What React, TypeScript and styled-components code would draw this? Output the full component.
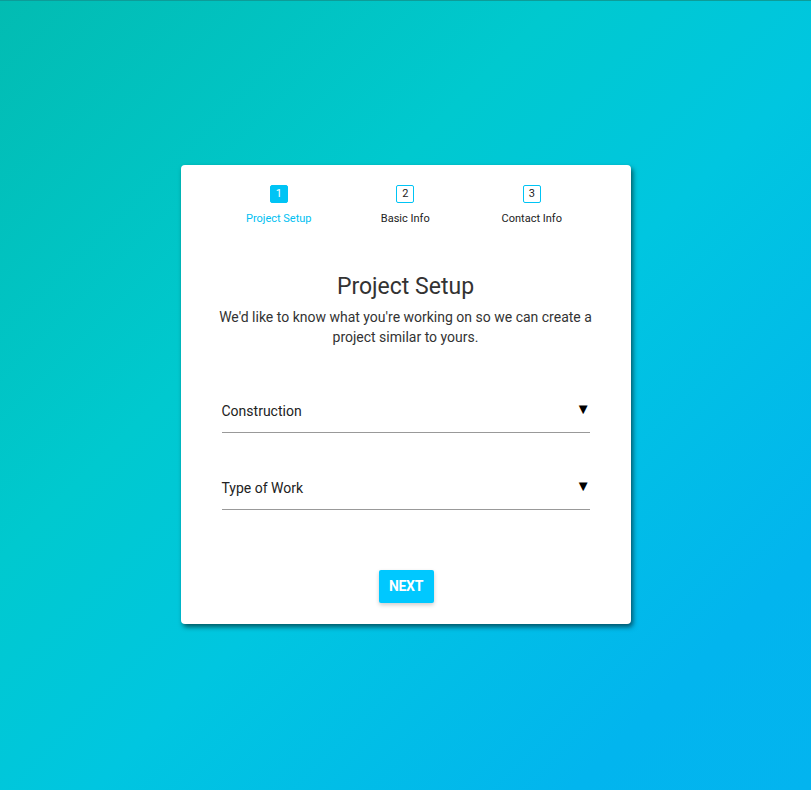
import React from "react";
import styled, { createGlobalStyle } from "styled-components";

const Global = createGlobalStyle`
  html, body { margin: 0; padding: 0; }
  body { font-family: Roboto, "Noto Sans", Arial, sans-serif; }
`;

const Page = styled.div`
  box-sizing: border-box;
  width: 100%;
  min-height: 790px;
  border-top: 1px solid #0d9c98;
  background: linear-gradient(135deg, #02bcb2 0%, #00c9cf 35%, #00c6e0 55%, #02b5ee 85%, #03b4ef 100%);
  display: flex;
  align-items: center;
  justify-content: center;
`;

const Card = styled.div`
  box-sizing: border-box;
  width: 450px;
  height: 459px;
  margin-top: -3px;
  background: #fff;
  border-radius: 4px;
  box-shadow: 2px 3px 5px rgba(0, 0, 0, 0.55);
  padding: 20px 0 21px;
  display: flex;
  flex-direction: column;
  align-items: center;
`;

const Steps = styled.div`
  display: grid;
  grid-template-columns: repeat(3, 126.5px);
  width: 380px;
`;

const Step = styled.div`
  display: flex;
  flex-direction: column;
  align-items: center;
`;

const StepBox = styled.div<{ $active?: boolean }>`
  box-sizing: border-box;
  width: 18px;
  height: 18px;
  border: 1px solid #00c4f5;
  border-radius: 2px;
  background: ${(p) => (p.$active ? "#00c4f5" : "#fff")};
  color: ${(p) => (p.$active ? "#fff" : "#222")};
  font-size: 11px;
  line-height: 16px;
  text-align: center;
`;

const StepLabel = styled.div<{ $active?: boolean }>`
  margin-top: 9px;
  font-size: 11px;
  line-height: 14px;
  color: ${(p) => (p.$active ? "#00bff2" : "#222")};
`;

const Title = styled.h1`
  margin: 47px 0 0;
  font-size: 23px;
  font-weight: 400;
  line-height: 27px;
  color: #333;
`;

const Subtitle = styled.p`
  margin: 7px 0 0;
  width: 390px;
  font-size: 14px;
  line-height: 20px;
  color: #333;
  text-align: center;
`;

const Fields = styled.div`
  margin-top: 43px;
  width: 368px;
  display: flex;
  flex-direction: column;
  gap: 34px;
`;

const Field = styled.div`
  box-sizing: border-box;
  height: 43px;
  border-bottom: 1px solid #999;
  display: flex;
  align-items: center;
  justify-content: space-between;
  font-size: 14px;
  color: #222;
`;

const Arrow = styled.span`
  font-size: 15px;
  line-height: 15px;
  color: #000;
  margin-bottom: 2px;
  margin-right: -1px;
`;

const Button = styled.button`
  margin-top: 60px;
  width: 55px;
  height: 33px;
  border: none;
  border-radius: 2px;
  background: #00c8ff;
  color: #fff;
  font-family: Roboto, Arial, sans-serif;
  font-weight: 700;
  font-size: 14px;
  letter-spacing: -0.3px;
  padding: 0;
  box-shadow: 0 2px 4px rgba(0, 0, 0, 0.2);
  margin-left: 1px;
`;

const steps = ["Project Setup", "Basic Info", "Contact Info"];

export default function App() {
  return (
    <>
      <Global />
      <Page>
        <Card>
          <Steps>
            {steps.map((s, i) => (
              <Step key={s}>
                <StepBox $active={i === 0}>{i + 1}</StepBox>
                <StepLabel $active={i === 0}>{s}</StepLabel>
              </Step>
            ))}
          </Steps>
          <Title>Project Setup</Title>
          <Subtitle>
            We'd like to know what you're working on so we can create a project similar to yours.
          </Subtitle>
          <Fields>
            <Field>
              <span>Construction</span>
              <Arrow>▼</Arrow>
            </Field>
            <Field>
              <span>Type of Work</span>
              <Arrow>▼</Arrow>
            </Field>
          </Fields>
          <Button>NEXT</Button>
        </Card>
      </Page>
    </>
  );
}
